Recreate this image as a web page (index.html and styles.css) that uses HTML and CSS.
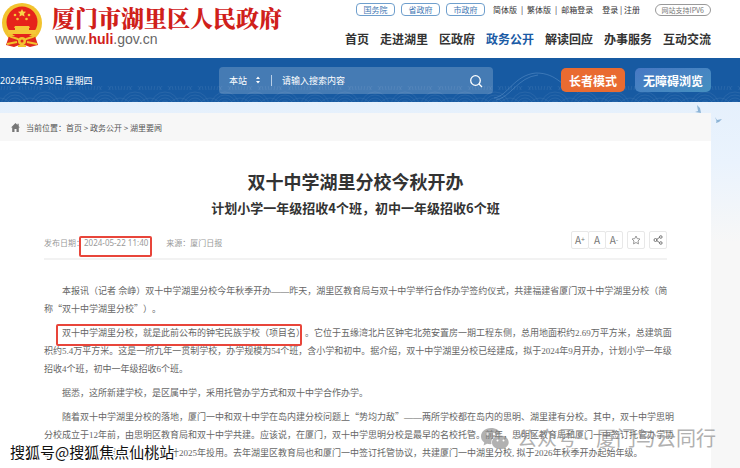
FILE: index.html
```
<!DOCTYPE html>
<html lang="zh-CN">
<head>
<meta charset="utf-8">
<meta name="viewport" content="width=device-width, initial-scale=1">
<title>双十中学湖里分校今秋开办</title>
<link rel="stylesheet" href="styles.css">
</head>
<body>

<header class="header">
  <a class="logo" href="#">
    <svg class="emblem" viewBox="0 0 42 45">
      <circle cx="21" cy="20" r="20" fill="#f2c32e"/>
      <path d="M8 33 L34 33 L37 42 L29 44 L21 41 L13 44 L5 42 Z" fill="#e0281c"/>
      <circle cx="21" cy="19" r="15.500" fill="#e6231b"/>
      <path d="M21 6 l1.200 2.500 2.800.3 -2 1.900 .6 2.800 -2.600-1.300 -2.600 1.300 .6-2.800 -2-1.900 2.800-.3z" fill="#f8d648"/>
      <g fill="#f5c838">
        <circle cx="14" cy="12" r="1.300"/><circle cx="28" cy="12" r="1.300"/>
        <circle cx="16.500" cy="16" r="1.300"/><circle cx="25.500" cy="16" r="1.300"/>
        <path d="M14 23h14l1 2h-1v2h7v4H7v-4h7v-2h-1z"/>
      </g>
      <path d="M7 32 C12 36 16 34 18 37 H24 C26 34 30 36 35 32" fill="none" stroke="#f2c32e" stroke-width="2"/>
      <circle cx="21" cy="38" r="4" fill="#f2c32e"/>
      <circle cx="21" cy="38" r="1.500" fill="#e0281c"/>
      <path d="M6 41l10-2M36 41l-10-2M17 43h8" stroke="#f2c32e" stroke-width="2"/>
    </svg>
    <span class="logo-text">
      <span class="logo-name">厦门市湖里区人民政府</span>
      <span class="logo-url">www.<b>huli</b>.gov.cn</span>
    </span>
  </a>
  <div class="header-right">
    <div class="toplinks">
      <a class="pill" href="#">国务院</a>
      <a class="pill" href="#">省政府</a>
      <a class="pill" href="#">市政府</a>
      <span class="group"><a href="#">简体版</a><i>|</i><a href="#">繁体版</a><i>|</i><a href="#">邮箱登录</a></span>
      <span class="user"><a href="#">登录</a> | <a href="#">注册</a></span>
      <span class="ipv6">网站支持IPV6</span>
    </div>
    <nav class="nav">
      <a href="#">首页</a>
      <a href="#">走进湖里</a>
      <a href="#">区政府</a>
      <a class="active" href="#">政务公开</a>
      <a href="#">解读回应</a>
      <a href="#">办事服务</a>
      <a href="#">互动交流</a>
    </nav>
  </div>
</header>

<div class="banner">
  <svg class="waves" width="100%" height="44">
    <defs>
      <pattern id="wave" width="30" height="16" patternUnits="userSpaceOnUse">
        <g fill="none" stroke="#fff" stroke-width="0.600">
          <circle cx="15" cy="16" r="14"/><circle cx="15" cy="16" r="11"/><circle cx="15" cy="16" r="8"/><circle cx="15" cy="16" r="5"/>
          <circle cx="0" cy="20" r="12"/><circle cx="30" cy="20" r="12"/>
        </g>
      </pattern>
    </defs>
    <rect y="28" width="100%" height="16" fill="url(#wave)" opacity="0.120"/>
    <path d="M494 40 C508 38 514 17 536 15 C558 15 562 30 578 34 M496 42 C510 40 518 19 538 17" fill="none" stroke="#9cc6ec" stroke-width="0.800" opacity="0.350"/>
  </svg>
  <span class="date">2024年5月30日 星期四</span>
  <form class="search">
    <select aria-label="搜索范围"><option>本站</option></select>
    <svg class="arrows" viewBox="0 0 6 8"><path d="M1 3l2-2.500 2 2.500zM1 5l2 2.500 2-2.500z" fill="#fff"/></svg>
    <input type="text" placeholder="请输入搜索内容" aria-label="请输入搜索内容">
    <button type="submit" aria-label="搜索">
      <svg viewBox="0 0 14 14" fill="none" stroke="#fff" stroke-width="1.300"><circle cx="6.500" cy="6.500" r="4.800"/><path d="M10 10l3 3"/></svg>
    </button>
  </form>
  <div class="modes">
    <button class="elder" type="button">长者模式</button>
    <button class="barrier" type="button">无障碍浏览</button>
  </div>
</div>

<div class="page">
  <svg class="birds" viewBox="0 0 28 20" fill="#8db4d6">
    <path d="M3 0l3 3 1 5-6-1 3-1zM21 12l2 3 5-1-3 3-3 1 .5-2z"/>
  </svg>
  <main class="main">
    <div class="crumbs">
      <svg class="home" viewBox="0 0 9 9"><path d="M4.500 0L0 4.500h1.200V9h2.300V6h2v3h2.300V4.500H9L7.700 3.200V.8H6.500V2z" fill="#777"/></svg>
      <span>当前位置：<a href="#">首页</a> &gt; <a href="#">政务公开</a> &gt; <a href="#">湖里要闻</a></span>
    </div>
    <article class="article">
      <h1>双十中学湖里分校今秋开办</h1>
      <h2>计划小学一年级招收4个班，初中一年级招收6个班</h2>
      <div class="meta">
        <span class="info">发布日期：<span class="marked mark-date">2024-05-22 11:40</span></span>
        <span class="info">来源：厦门日报</span>
        <div class="tools">
          <div class="sizes">
            <button type="button">A<sup>+</sup></button>
            <button type="button">A</button>
            <button type="button">A<sup>-</sup></button>
          </div>
          <button type="button" aria-label="收藏"><svg viewBox="0 0 10 10" fill="none" stroke="#999"><path d="M5 1l1.200 2.600 2.800.4-2 2 .5 2.900L5 7.500 2.500 8.900 3 6 1 4l2.800-.4z"/></svg></button>
          <button type="button" aria-label="分享"><svg viewBox="0 0 10 10" fill="none" stroke="#777"><path d="M3 5l4-3M3 5l4 3"/><circle cx="2.500" cy="5" r="1.500"/><circle cx="7.800" cy="2" r="1.300"/><circle cx="7.800" cy="8" r="1.300"/></svg></button>
        </div>
      </div>
      <div class="content">
        <p>本报讯（记者 佘峥）双十中学湖里分校今年秋季开办——昨天，湖里区教育局与双十中学举行合作办学签约仪式，共建福建省厦门双十中学湖里分校（简称<span class="q">“</span>双十中学湖里分校<span class="q">”</span>）。</p>
        <p><span class="marked mark-text">双十中学湖里分校，就是此前公布的钟宅民族学校（项目名）</span>。它位于五缘湾北片区钟宅北苑安置房一期工程东侧，总用地面积约2.69万平方米，总建筑面积约5.4万平方米。这是一所九年一贯制学校，办学规模为54个班，含小学和初中。据介绍，双十中学湖里分校已经建成，拟于2024年9月开办，计划小学一年级招收4个班，初中一年级招收6个班。</p>
        <p>据悉，这所新建学校，是区属中学，采用托管办学方式和双十中学合作办学。</p>
        <p>随着双十中学湖里分校的落地，厦门一中和双十中学在岛内建分校问题上<span class="q">“</span>势均力敌<span class="q">”</span>——两所学校都在岛内的思明、湖里建有分校。其中，双十中学思明分校成立于12年前，由思明区教育局和双十中学共建。应该说，在厦门，双十中学思明分校是最早的名校托管。前年，思明区教育局和厦门一中签订托管办学协议，厦门一中思明分校项目，预计2025年投用。去年湖里区教育局也和厦门一中签订托管协议，共建厦门一中湖里分校, 拟于2026年秋季开办起始年级。</p>
      </div>
    </article>
  </main>
</div>

<div class="sohu">搜狐号@搜狐焦点仙桃站</div>
<div class="wechat">
  <svg viewBox="0 0 28 22">
    <path d="M10 0C4 0 0 4 0 8.500c0 2.500 1.300 4.500 3.300 6L2.500 17.500l3.500-1.800c1.500.4 3 .5 4.500.4C9.500 10.500 14 6.300 20 6.500 19 2.500 15 0 10 0z" fill="#888"/>
    <path d="M19.500 7.500c-5 0-8.500 3.200-8.500 7s3.500 6.700 8.500 6.700c1 0 2-.2 3-.5l2.700 1.300-.7-2.300c2-1.300 3.200-3.200 3.200-5.200 0-3.800-3.500-7-8.200-7z" fill="#888"/>
    <g fill="#fff"><circle cx="6.500" cy="6" r="1.300"/><circle cx="13" cy="6" r="1.300"/><circle cx="16.500" cy="12.500" r="1"/><circle cx="22.500" cy="12.500" r="1"/></g>
  </svg>
  <span>公众号 · 厦门与云同行</span>
</div>

</body>
</html>
```
FILE: styles.css
```
* {
    box-sizing: border-box;
}

body {
    display: flex;
    flex-direction: column;
    margin: 0;
    height: 100vh;
    overflow: hidden;
    position: relative;
    background-color: #f7f7f7;
    color: #333;
    font-family: "Noto Sans CJK SC", sans-serif;
    font-size: 8px;
    text-spacing-trim: space-all;
}

a {
    color: inherit;
    text-decoration: none;
}

button {
    font-family: inherit;
    padding: 0;
    border: none;
    cursor: pointer;
}

/* Header */
.header {
    display: flex;
    flex: none;
    justify-content: space-between;
    height: 58px;
    padding: 3px 29px 0 1px;
    background-color: #fff;
}

.logo {
    display: flex;
    gap: 9px;
}

.emblem {
    width: 42px;
    height: 45px;
}

.logo-text {
    display: flex;
    flex-direction: column;
    padding-top: 1px;
}

.logo-name {
    color: #d0201a;
    font-family: "Noto Serif CJK SC", "Noto Sans CJK SC", serif;
    font-size: 23px;
    font-weight: 900;
    line-height: 27px;
}

.logo-url {
    padding-left: 3px;
    color: #666;
    font-family: "Liberation Sans", Arial, sans-serif;
    font-size: 14px;
    line-height: 16px;
}

.logo-url b {
    color: #d0201a;
}

.header-right {
    display: flex;
    flex-direction: column;
    gap: 14px;
}

.toplinks {
    display: flex;
    align-items: center;
    gap: 6px;
    padding-left: 11px;
    line-height: 12px;
    white-space: nowrap;
}

.pill {
    width: 39px;
    border: 1px solid #6f9fcd;
    border-radius: 4px;
    color: #3f78b4;
    text-align: center;
    line-height: 11px;
}

.group {
    display: flex;
    gap: 4px;
    padding-left: 2px;
}

.group i {
    font-style: normal;
}

.user {
    margin-left: 3px;
}

.ipv6 {
    margin-left: auto;
    padding: 0 6px;
    border: 1px solid #999;
    border-radius: 7px;
    color: #777;
    font-size: 7px;
    line-height: 10px;
}

.nav {
    display: flex;
    gap: 11px;
    font-size: 12px;
    font-weight: bold;
    line-height: 18px;
    white-space: nowrap;
}

.nav .active {
    color: #1b5ba5;
}

/* Blue banner */
.banner {
    display: flex;
    flex: none;
    align-items: center;
    position: relative;
    height: 44px;
    padding-right: 29px;
    background-color: #175aa2;
    color: #fff;
}

.waves {
    position: absolute;
    left: 0;
    top: 0;
}

.date {
    flex: 0 0 219px;
    font-family: "Noto Sans", "Noto Sans CJK SC", sans-serif;
    font-size: 9px;
}

.search {
    display: flex;
    align-items: center;
    position: relative;
    flex: 1;
    height: 27px;
    padding: 0 10px;
    border-radius: 4px;
    background-color: rgba(255, 255, 255, 0.2);
}

.search select {
    appearance: none;
    width: 26px;
    padding: 0;
    border: none;
    background: none;
    color: #fff;
    font-family: inherit;
    font-size: 9px;
}

.arrows {
    width: 6px;
    height: 8px;
}

.search input {
    flex: 1;
    min-width: 0;
    height: 11px;
    margin-left: 10px;
    padding: 0 0 0 10px;
    border: none;
    border-left: 1px solid #b9cfe6;
    background: none;
    color: #fff;
    font-family: inherit;
    font-size: 9px;
}

.search input::placeholder {
    color: #fff;
}

.search button {
    width: 14px;
    height: 14px;
    background: none;
}

.modes {
    display: flex;
    gap: 10px;
    position: relative;
    margin-left: 68px;
}

.modes button {
    height: 24px;
    padding: 0 8px;
    border-radius: 5px;
    color: #fff;
    font-size: 12px;
    font-weight: bold;
}

.modes .elder {
    background-color: #e96b31;
}

.modes .barrier {
    background: linear-gradient(160deg, #4878c4, #4590c0);
}

/* Page */
.page {
    display: flex;
    flex: 1 0 auto;
    position: relative;
    padding: 11px 29px 0 0;
    background: linear-gradient(#e5f0fc, #eaf3fd 60px, #f7f7f7 140px);
}

.birds {
    position: absolute;
    z-index: 1;
    right: 18px;
    top: 3px;
    width: 28px;
    height: 20px;
}

.main {
    display: flex;
    flex-direction: column;
    flex: 1;
    min-width: 0;
    background-color: #f7f7f7;
}

.crumbs {
    display: flex;
    align-items: center;
    gap: 6px;
    height: 28px;
    padding-left: 11px;
    color: #555;
}

.home {
    width: 9px;
    height: 9px;
}

.article {
    flex: 1;
    padding: 26px 44px 0;
    background-color: #fff;
}

.article h1 {
    margin: 0;
    font-size: 18px;
    line-height: 28px;
    text-align: center;
}

.article h2 {
    margin: 0;
    font-size: 13px;
    line-height: 26px;
    text-align: center;
}

.meta {
    display: flex;
    align-items: center;
    gap: 18px;
    height: 39px;
    border-bottom: 2px solid #f2f2f2;
    color: #999;
}

.info {
    padding-top: 5px;
}

.tools {
    display: flex;
    gap: 4px;
    margin-left: auto;
}

.sizes {
    display: flex;
}

.tools button {
    width: 18px;
    height: 18px;
    border: 1px solid #e8e8e8;
    border-radius: 2px;
    background-color: #fff;
    color: #777;
    font-size: 10px;
    line-height: 16px;
}

.sizes button + button {
    margin-left: -1px;
}

.tools sup {
    font-size: 7px;
    line-height: 1px;
    vertical-align: 2px;
}

.tools svg {
    display: block;
    width: 10px;
    height: 10px;
    margin: 0 auto;
}

.content {
    margin-right: -9px;
    padding-top: 22px;
    color: #666;
    font-family: "Liberation Serif", "Noto Sans CJK SC", serif;
    font-size: 9px;
    line-height: 18px;
}

.content p {
    margin: 0 0 6px;
    text-indent: 2em;
}

.q {
    font-family: "Noto Sans CJK SC", sans-serif;
}

/* Red boxes around the date and the first sentence */
.marked {
    position: relative;
    text-indent: 0;
}

.marked::after {
    content: "";
    position: absolute;
    border: 2px solid #e8453a;
    border-radius: 2px;
}

.mark-date {
    font-family: "Noto Sans", sans-serif;
}

.mark-date::after {
    inset: -1px -4px -9px -5px;
}

.mark-text::after {
    inset: -4px 3px -8px -6px;
}

/* Watermarks */
.sohu {
    position: absolute;
    left: 10px;
    bottom: 5px;
    color: #111;
    font-size: 15px;
    line-height: 22px;
    text-shadow: 1px 1px #fff, -1px -1px #fff, 1px -1px #fff, -1px 1px #fff, 2px 0 #fff, -2px 0 #fff;
}

.wechat {
    display: flex;
    align-items: center;
    gap: 8px;
    position: absolute;
    right: 24px;
    bottom: 15px;
    color: #888;
    font-family: "DejaVu Sans", "Noto Sans CJK SC", sans-serif;
    font-size: 20px;
    line-height: 28px;
    opacity: 0.65;
}

.wechat svg {
    width: 28px;
    height: 22px;
}
```
